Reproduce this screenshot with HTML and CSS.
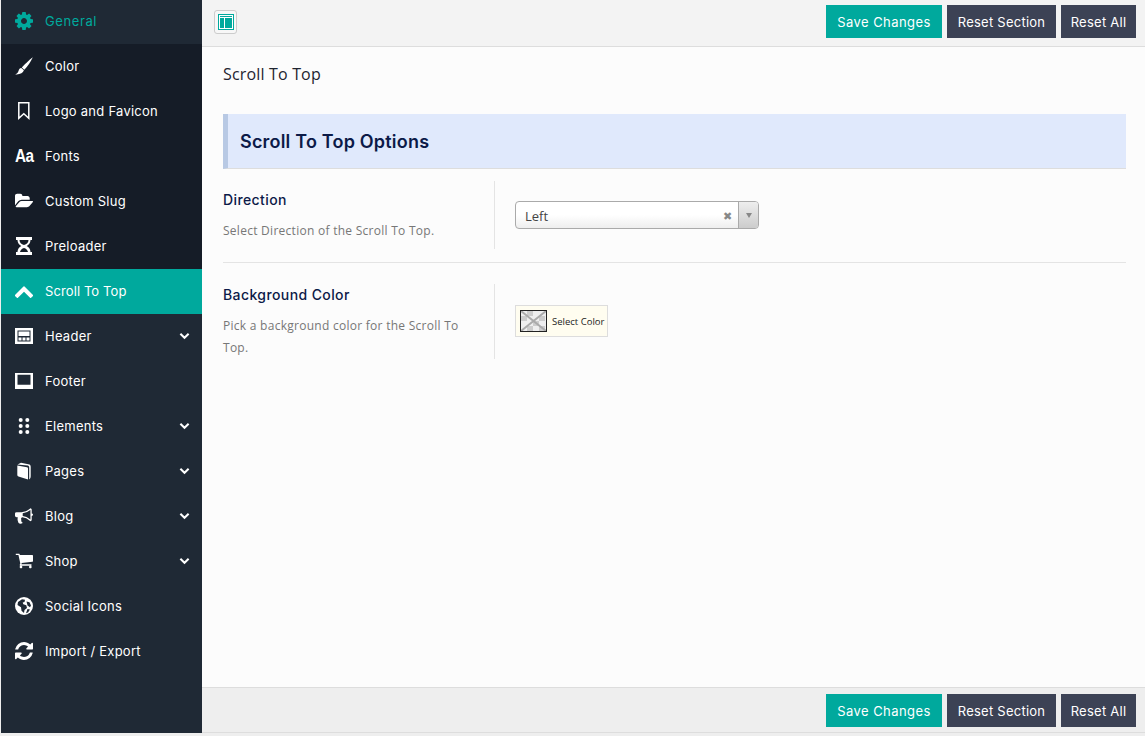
FILE: index.html
```html
<!DOCTYPE html>
<html>
<head>
    <title>Scroll To Top</title>
    <link rel="stylesheet" href="styles.css">
</head>
<body>
<div class="app">
    <ul class="menu">
        <li class="menu-item current-group">
            <svg class="ico teal" viewBox="128 128 1536 1536"><path d="M1152 896q0-106-75-181t-181-75-181 75-75 181 75 181 181 75 181-75 75-181zm512-109v222q0 12-8 23t-20 13l-185 28q-19 54-39 91 35 50 107 138 10 12 10 25t-9 23q-27 37-99 108t-94 71q-12 0-26-9l-138-108q-44 23-91 38-16 136-29 186-7 28-36 28h-222q-14 0-24.500-8.500t-11.500-21.500l-28-184q-49-16-90-37l-141 107q-10 9-25 9-14 0-25-11-126-114-165-168-7-10-7-23 0-12 8-23 15-21 51-66.500t54-70.500q-27-50-41-99l-183-27q-13-2-21-12.500t-8-23.500v-222q0-12 8-23t19-13l186-28q14-46 39-92-40-57-107-138-10-12-10-24 0-10 9-23 26-36 98.500-107.500t94.500-71.500q13 0 26 10l138 107q44-23 91-38 16-136 29-186 7-28 36-28h222q14 0 24.500 8.500t11.500 21.500l28 184q49 16 90 37l142-107q9-9 24-9 13 0 25 10 129 119 165 170 7 8 7 22 0 12-8 23-15 21-51 66.500t-54 70.500q26 50 41 98l183 28q13 2 21 12.500t8 23.500z"/></svg>
            <span class="menu-label teal-text">General</span>
        </li>
        <li class="menu-item sub">
            <svg class="ico" viewBox="0 0 18 18"><path d="M17.800.2C14 3 10 7 6.800 10.500l2.500 2.200C12.800 9.500 15.500 5 17.800.2z"/><path d="M6.300 11 8.900 13.300C8 16 4.800 17.900.2 17.400c2-.8 2.800-1.900 3.300-3.500.5-1.700 1.300-2.800 2.800-2.900z"/></svg>
            <span class="menu-label">Color</span>
        </li>
        <li class="menu-item sub">
            <svg class="ico" viewBox="0 0 18 18"><path d="M3.800.8h10v15.500l-5-4.500-5 4.500z" fill="none" stroke="#fff" stroke-width="1.500"/></svg>
            <span class="menu-label">Logo and Favicon</span>
        </li>
        <li class="menu-item sub">
            <span class="ico aa">Aa</span>
            <span class="menu-label">Fonts</span>
        </li>
        <li class="menu-item sub">
            <svg class="ico" viewBox="0 0 1879 1792"><path d="M1879 952q0 31-31 66l-336 396q-43 51-120.500 86.500t-143.500 35.500h-1088q-34 0-60.500-13t-26.500-43q0-31 31-66l336-396q43-51 120.500-86.500t143.500-35.500h1088q34 0 60.500 13t26.500 43zm-343-344v160h-832q-94 0-197 47.500t-164 119.500l-337 396-5 6q0-4-.5-12.500t-.5-12.500v-960q0-92 66-158t158-66h320q92 0 158 66t66 158v32h544q92 0 158 66t66 158z"/></svg>
            <span class="menu-label">Custom Slug</span>
        </li>
        <li class="menu-item sub">
            <svg class="ico" viewBox="0 0 18 18"><path fill-rule="evenodd" d="M1 0h16v3h-1.500c0 3-1.800 4.800-3.800 6 2 1.200 3.800 3 3.800 6H17v3H1v-3h1.500c0-3 1.800-4.800 3.800-6-2-1.200-3.800-3-3.800-6H1zM4.500 3c0 2.500 1.800 4.200 4.500 5 2.700-.8 4.500-2.500 4.500-5zM5 15h8c-.3-1.900-2-3.400-4-4-2 .6-3.700 2.100-4 4z"/></svg>
            <span class="menu-label">Preloader</span>
        </li>
        <li class="menu-item active">
            <svg class="ico" viewBox="109 277 1574 1238"><path d="M1683 1331l-166 165q-19 19-45 19t-45-19l-531-531-531 531q-19 19-45 19t-45-19l-166-165q-19-19-19-45.500t19-45.500l742-741q19-19 45-19t45 19l742 741q19 19 19 45.500t-19 45.500z"/></svg>
            <span class="menu-label">Scroll To Top</span>
        </li>
        <li class="menu-item">
            <svg class="ico" viewBox="0 0 18 18"><path fill-rule="evenodd" d="M0 1h18v16H0zM2.500 3.500v11h13v-11z"/><path d="M3.500 4.500h11V9h-11zM3.500 10.500h3v3h-3zM7.500 10.500h3v3h-3zM11.500 10.500h3v3h-3z"/></svg>
            <span class="menu-label">Header</span>
            <svg class="caret" viewBox="0 0 12 8"><path d="M1.500 1.500 6 6l4.500-4.500" fill="none" stroke="#fff" stroke-width="2.200"/></svg>
        </li>
        <li class="menu-item">
            <svg class="ico" viewBox="0 0 18 18"><path fill-rule="evenodd" d="M0 1h18v16H0zM2.500 2.800v10h13v-10z"/></svg>
            <span class="menu-label">Footer</span>
        </li>
        <li class="menu-item">
            <svg class="ico" viewBox="0 0 18 18"><circle cx="5.700" cy="3" r="2"/><circle cx="12.300" cy="3" r="2"/><circle cx="5.700" cy="9" r="2"/><circle cx="12.300" cy="9" r="2"/><circle cx="5.700" cy="15" r="2"/><circle cx="12.300" cy="15" r="2"/></svg>
            <span class="menu-label">Elements</span>
            <svg class="caret" viewBox="0 0 12 8"><path d="M1.500 1.500 6 6l4.500-4.500" fill="none" stroke="#fff" stroke-width="2.200"/></svg>
        </li>
        <li class="menu-item">
            <svg class="ico" viewBox="0 0 18 18"><path d="M2.500 2.500 6 .8l8.500 1.800c1 .6 1.200 1.500 1.200 2.500V14c0 1.500-.3 2.700-1.500 3.400V5.500c0-1-.5-1.600-1.500-1.900z"/><path d="M2.300 3.500 12 5.200c.8.200 1 .6 1 1.300V17.400L3.500 14.500c-.8-.3-1.200-.8-1.200-1.500z"/></svg>
            <span class="menu-label">Pages</span>
            <svg class="caret" viewBox="0 0 12 8"><path d="M1.500 1.500 6 6l4.500-4.500" fill="none" stroke="#fff" stroke-width="2.200"/></svg>
        </li>
        <li class="menu-item">
            <svg class="ico" viewBox="0 0 1792 1792"><path d="M1664 640q53 0 90.500 37.500t37.500 90.500-37.500 90.500-90.500 37.500v384q0 52-38 90t-90 38q-417-347-812-380-58 19-91 66t-31 100.500 40 92.500q-20 33-23 65.500t6 58 33.500 55 48 50 61.500 50.500q-29 58-111.500 83t-168.500 11.500-132-55.500q-7-23-29.500-87.500t-32-94.500-23-89-15-101 3.500-98.500 22-110.500h-122q-66 0-113-47t-47-113v-192q0-66 47-113t113-47h480q435 0 896-384 52 0 90 38t38 90v384zm-128 604v-954q-394 302-768 343v270q377 42 768 341z"/></svg>
            <span class="menu-label">Blog</span>
            <svg class="caret" viewBox="0 0 12 8"><path d="M1.500 1.500 6 6l4.500-4.500" fill="none" stroke="#fff" stroke-width="2.200"/></svg>
        </li>
        <li class="menu-item">
            <svg class="ico" viewBox="0 192 1728 1536"><path d="M704 1536q0 52-38 90t-90 38-90-38-38-90 38-90 90-38 90 38 38 90zm896 0q0 52-38 90t-90 38-90-38-38-90 38-90 90-38 90 38 38 90zm128-1088v512q0 24-16.500 42.500t-40.500 21.500l-1044 122q13 60 13 70 0 16-24 64h920q26 0 45 19t19 45-19 45-45 19h-1024q-26 0-45-19t-19-45q0-11 8-31.500t16-36 21.500-40 15.500-29.500l-177-823h-204q-26 0-45-19t-19-45 19-45 45-19h256q16 0 28.500 6.500t19.500 15.500 13 24.500 8 26 5.500 29.500 4.500 26h1201q26 0 45 19t19 45z"/></svg>
            <span class="menu-label">Shop</span>
            <svg class="caret" viewBox="0 0 12 8"><path d="M1.500 1.500 6 6l4.500-4.500" fill="none" stroke="#fff" stroke-width="2.200"/></svg>
        </li>
        <li class="menu-item">
            <svg class="ico" viewBox="0 0 18 18"><circle cx="9" cy="9" r="9"/><path fill="#1f2935" d="M3 5 7 2.300l3 .4-.5 2.300-1.800.6.600 1.600 3 1 .7 2.800-2.500 2-.5 3-2.500-2.300-.5-3.400L2.500 8zM11.500 4.500l3 .8 1.500 3.200-1 1.800-2.500-1.800zM12.500 12l2.500.500-2 3-2 .8z"/></svg>
            <span class="menu-label">Social Icons</span>
        </li>
        <li class="menu-item">
            <svg class="ico" viewBox="128 128 1536 1536"><path d="M1639 1056q0 5-1 7-64 268-268 434.500t-478 166.500q-146 0-282.500-55t-243.500-157l-129 129q-19 19-45 19t-45-19-19-45v-448q0-26 19-45t45-19h448q26 0 45 19t19 45-19 45l-137 137q71 66 161 102t187 36q134 0 250-65t186-179q11-17 53-117 8-23 30-23h192q13 0 22.500 9.500t9.500 22.500zm25-800v448q0 26-19 45t-45 19h-448q-26 0-45-19t-19-45 19-45l138-138q-148-137-349-137-134 0-250 65t-186 179q-11 17-53 117-8 23-30 23h-199q-13 0-22.500-9.500t-9.500-22.500v-7q65-268 270-434.500t480-166.500q146 0 284 55.500t245 156.500l130-129q19-19 45-19t45 19 19 45z"/></svg>
            <span class="menu-label">Import / Export</span>
        </li>
    </ul>

    <div class="main">
        <div class="bar top-bar">
            <span class="expand-btn">
                <svg viewBox="0 0 16 16" width="16" height="16"><rect x="0.500" y="0.500" width="15" height="15" fill="#fff" stroke="#00a99d"/><rect x="2" y="2" width="12" height="1" fill="#00a99d"/><rect x="2" y="4" width="4" height="10" fill="#00a99d"/><rect x="7" y="4" width="7" height="10" fill="#00a99d"/></svg>
            </span>
            <button class="btn btn-save">Save Changes</button>
            <button class="btn btn-section">Reset Section</button>
            <button class="btn btn-all">Reset All</button>
        </div>

        <div class="content">
            <h2 class="page-title">Scroll To Top</h2>
            <h3 class="section-head">Scroll To Top Options</h3>

            <div class="field first">
                <div class="field-info">
                    <div class="field-name">Direction</div>
                    <div class="field-desc">Select Direction of the Scroll To Top.</div>
                </div>
                <div class="field-control">
                    <div class="select">
                        <span class="select-value">Left</span>
                        <span class="select-clear">&#10006;</span>
                        <span class="select-arrow"><i></i></span>
                    </div>
                </div>
            </div>

            <div class="field last">
                <div class="field-info">
                    <div class="field-name">Background Color</div>
                    <div class="field-desc">Pick a background color for the Scroll To Top.</div>
                </div>
                <div class="field-control">
                    <div class="color-btn">
                        <svg class="swatch" viewBox="0 0 27 22" width="27" height="22">
                            <rect width="27" height="22" fill="#eee"/>
                            <path d="M7 1h6v5H7zM19 6h6v5h-6zM1 6h6v5H1zM13 11h6v5h-6zM7 16h6v5H7zM19 16h6v5h-6z" fill="#ccc"/>
                            <path d="M1 1l25 20M26 1 1 21" stroke="#aaa" stroke-width="2"/>
                            <rect x="0.500" y="0.500" width="26" height="21" fill="none" stroke="#222"/>
                        </svg>
                        <span>Select Color</span>
                    </div>
                </div>
            </div>
        </div>

        <div class="bar bottom-bar">
            <button class="btn btn-save">Save Changes</button>
            <button class="btn btn-section">Reset Section</button>
            <button class="btn btn-all">Reset All</button>
        </div>
    </div>
</div>
</body>
</html>
```

FILE: styles.css
```css
body {
    margin: 0;
    background-color: #eeeeee;
    font-family: "Open Sans", sans-serif;
    overflow: hidden;
}
.app {
    display: flex;
    height: 733px;
    padding-left: 1px;
}

/* sidebar */
.menu {
    width: 201px;
    flex: none;
    margin: 0;
    padding: 0;
    list-style: none;
    background-color: #1f2935;
}
.menu-item {
    height: 45px;
    box-sizing: border-box;
    display: flex;
    align-items: center;
    padding: 0 12px 1px 14px;
    color: #fff;
}
.menu-item:first-child {
    height: 44px;
    padding-bottom: 2px;
}
.menu-item.sub {
    background-color: #151c27;
}
.menu-item.active {
    background-color: #00a99d;
}
.menu-label {
    margin-left: 12px;
    flex: 1;
    font-family: Inter, sans-serif;
    font-size: 13px;
    letter-spacing: 0.25px;
}
.active .menu-label {
    letter-spacing: 0.1px;
}
.teal-text {
    color: #00a99d;
    letter-spacing: 0.6px;
}
.ico {
    width: 18px;
    height: 18px;
    flex: none;
    fill: #fff;
}
.ico.teal {
    fill: #00a99d;
}
.aa {
    font-family: "Liberation Sans", sans-serif;
    font-weight: bold;
    font-size: 18px;
    line-height: 18px;
    letter-spacing: -0.5px;
    transform: scaleX(0.85);
    transform-origin: left center;
}
.caret {
    width: 11px;
    height: 8px;
    flex: none;
}

/* main column */
.main {
    flex: 1;
    display: flex;
    flex-direction: column;
    min-width: 0;
}
.bar {
    display: flex;
    align-items: center;
    justify-content: flex-end;
    gap: 5px;
    padding: 0 9px 0 12px;
    flex: none;
}
.top-bar {
    height: 46px;
    background-color: #f3f3f3;
    border-bottom: 1px solid #dddddd;
}
.bottom-bar {
    height: 46px;
    padding-top: 1px;
    background-color: #eeeeee;
    border-top: 1px solid #dddddd;
    border-bottom: 1px solid #dddddd;
    box-sizing: border-box;
}
.expand-btn {
    margin-right: auto;
    width: 23px;
    height: 24px;
    box-sizing: border-box;
    display: flex;
    align-items: center;
    justify-content: center;
    background-color: #f7f7f7;
    border: 1px solid #cccccc;
    border-radius: 3px;
    margin-top: -3px;
}
.btn {
    height: 33px;
    padding: 0;
    border: none;
    color: #fff;
    font-family: Inter, sans-serif;
    font-size: 13px;
    letter-spacing: 0.25px;
    cursor: pointer;
    background-color: #3c4255;
}
.btn-save {
    background-color: #00a99d;
    width: 116px;
    letter-spacing: 0.45px;
}
.btn-section {
    width: 109px;
}
.btn-all {
    width: 75px;
}
.top-bar .btn {
    margin-top: -3px;
}

/* content */
.content {
    flex: 1;
    background-color: #fcfcfc;
    padding: 0 19px 0 21px;
}
.page-title {
    margin: 16px 0 29px;
    font-size: 16px;
    line-height: 22px;
    font-weight: 500;
    letter-spacing: 0.17px;
    color: #1f2430;
}
.section-head {
    margin: 0;
    height: 55px;
    box-sizing: border-box;
    padding-left: 12px;
    display: flex;
    align-items: center;
    background-color: #e0e9fc;
    border-left: 5px solid #b8c9e4;
    border-bottom: 1px solid #dddddd;
    font-family: Inter, sans-serif;
    font-size: 18px;
    font-weight: 600;
    letter-spacing: 0.2px;
    color: #0c1a48;
}
.field {
    display: flex;
    align-items: stretch;
}
.field.first {
    margin-top: 12px;
    padding-bottom: 13px;
    border-bottom: 1px solid #e4e4e4;
}
.field.last {
    margin-top: 21px;
}
.field-info {
    width: 272px;
    box-sizing: border-box;
    padding-right: 30px;
    border-right: 1px solid #e4e4e4;
    padding-bottom: 7px;
}
.last .field-info {
    padding-bottom: 0;
}
.field-name {
    font-family: Inter, sans-serif;
    font-size: 14px;
    font-weight: 500;
    line-height: 20px;
    letter-spacing: 0.4px;
    color: #0c1a48;
    margin-top: 9px;
}
.last .field-name {
    margin-top: 1px;
}
.field-desc {
    margin-top: 10px;
    font-size: 12px;
    line-height: 22px;
    letter-spacing: 0.27px;
    color: #777777;
}
.field-control {
    padding-left: 20px;
}

/* select */
.select {
    width: 244px;
    height: 28px;
    box-sizing: border-box;
    margin-top: 20px;
    display: flex;
    align-items: center;
    border: 1px solid #aaaaaa;
    border-radius: 4px;
    background: linear-gradient(#ffffff 50%, #eeeeee);
}
.select-value {
    flex: 1;
    padding: 1px 0 0 9px;
    font-size: 13px;
    color: #444444;
}
.select-clear {
    width: 12px;
    font-size: 11px;
    color: #888888;
    margin-right: 5px;
    text-align: center;
}
.select-arrow {
    width: 19px;
    height: 100%;
    display: flex;
    align-items: center;
    justify-content: center;
    border-left: 1px solid #aaaaaa;
    border-radius: 0 3px 3px 0;
    background: linear-gradient(#eeeeee, #cccccc);
}
.select-arrow i {
    border-left: 3px solid transparent;
    border-right: 3px solid transparent;
    border-top: 5px solid #888888;
}

/* colour picker */
.color-btn {
    width: 93px;
    height: 32px;
    box-sizing: border-box;
    margin-top: 21px;
    display: flex;
    align-items: center;
    gap: 5px;
    padding-left: 4px;
    background-color: #fffdf0;
    border: 1px solid #dddddd;
    font-size: 9.5px;
    color: #222222;
    white-space: nowrap;
}
.swatch {
    flex: none;
}
```
